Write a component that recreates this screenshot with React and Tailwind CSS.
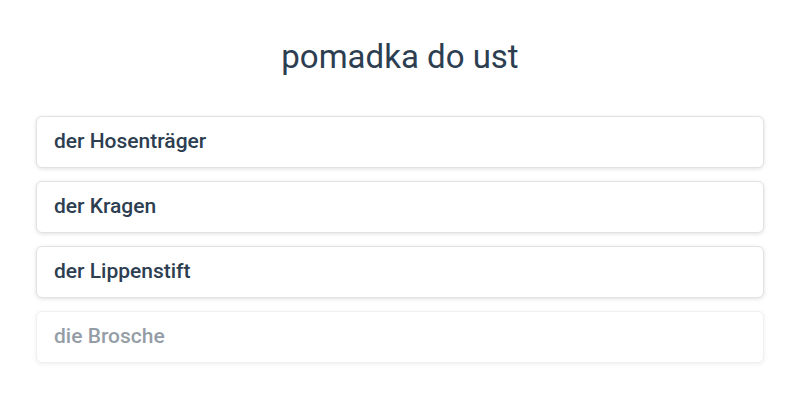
import React from 'react';

export default function App() {
  const items = [
    { text: "der Hosenträger" },
    { text: "der Kragen" },
    { text: "der Lippenstift" },
    { text: "die Brosche", faded: true },
  ];

  return (
    <div className="w-[800px] h-[400px] bg-white font-['Roboto',sans-serif] text-[#2c3e50]">
      {/* title */}
      <div className="pt-[38px] h-[116px]">
        <h1 className="text-center text-[33px] leading-[38px] font-normal">pomadka do ust</h1>
      </div>

      {/* answer cards */}
      <div className="px-[36px] flex flex-col gap-[13px]">
        {items.map((item, i) => (
          <div
            key={i}
            className={
              item.faded
                ? "h-[52px] flex items-center px-[17px] bg-white border border-[#e2e2e2] rounded-[6px] shadow-[0_1px_4px_rgba(0,0,0,0.12)] opacity-50"
                : "h-[52px] flex items-center px-[17px] bg-white border border-[#e2e2e2] rounded-[6px] shadow-[0_1px_4px_rgba(0,0,0,0.12)]"
            }
          >
            <span className="text-[21px] font-medium">{item.text}</span>
          </div>
        ))}
      </div>
    </div>
  );
}
